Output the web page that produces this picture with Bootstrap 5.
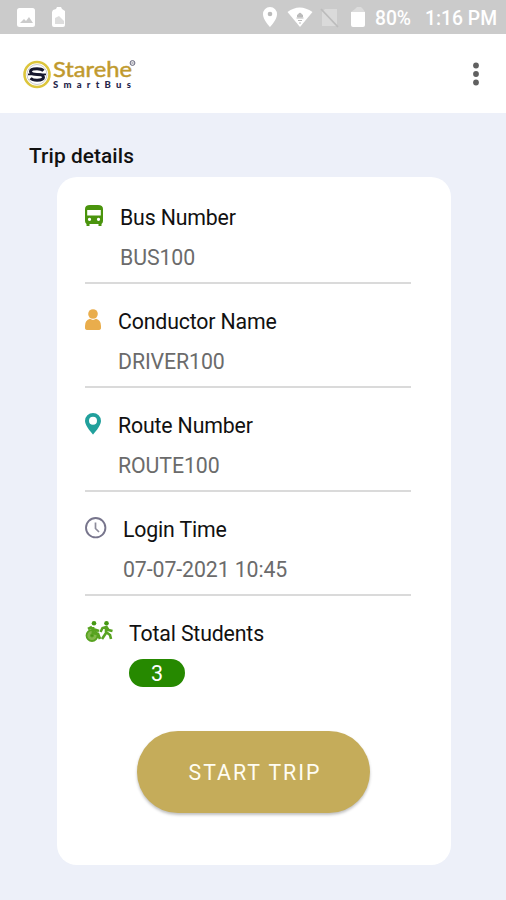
<!DOCTYPE html>
<html lang="en">
<head>
<meta charset="utf-8">
<meta name="viewport" content="width=device-width, initial-scale=1">
<title>Starehe SmartBus</title>
<link href="https://cdn.jsdelivr.net/npm/bootstrap@5.3.0/dist/css/bootstrap.min.css" rel="stylesheet">
<style>
body{font-family:Roboto,"Noto Sans",sans-serif;background:#edf0f9;color:#111;height:900px;overflow:hidden}
svg{display:block;flex:none}
.status{height:34px;background:#cbcbcb;color:#fff;font-size:19.3px;font-weight:500;line-height:37px;padding:0 9px 0 16px}
.status svg{height:34px}
.clock{margin-left:14px}
.topbar{height:79px;padding:0 22px 0 22px}
.page-title{font-size:20.8px;font-weight:500;line-height:24px;letter-spacing:.1px;padding:31px 0 0 29px;height:64px;margin:0}
.trip{width:394px;height:688px;margin-left:57px;border-radius:20px;padding:3px 40px 0 28px}
.item{height:104px;border-bottom:2px solid #dadada;padding-top:23px}
.item.last{border:0;height:auto}
.item svg{margin-top:1.5px}
.caption{font-size:21.3px;line-height:30px;letter-spacing:-.16px;white-space:nowrap}
.value{font-size:21.3px;line-height:30px;letter-spacing:-.1px;margin-top:10px;color:#6b6b6b;white-space:nowrap}
.count{width:56px;height:28px;font-size:21.5px;line-height:29px;background:#268900;margin-top:10px}
.start{width:233px;height:82px;margin:44px 0 0 52px;padding:2px 0 0 3px;background:#c5ac5a!important;color:#fffdf2!important;font-size:21.3px;letter-spacing:2px;box-shadow:0 2px 3px rgba(0,0,0,.25)}
</style>
</head>
<body>
<header>
  <div class="status d-flex">
    <svg width="60" viewBox="0 0 60 34"><rect y="8" x="1" width="18" height="19" rx="2.500" fill="#fff"/><path d="M4 23l4-4 2 2 3-4 4 6z" fill="#cbcbcb"/><path d="M37 10l3-1 1-2h4l1 2 3 2v14q0 2-2 2H38q-2 0-2-2V12z" fill="#fff"/><path d="M39 24v-6l4-2 5 5v3z" fill="#ddd"/></svg>
    <svg class="ms-auto" width="108" viewBox="0 0 108 34"><path d="M11 7a7 7 0 0 0-7 7.500C4 20 11 27 11 27s7-7 7-12.500A7 7 0 0 0 11 7z" fill="#fff"/><circle cx="11" cy="14" r="2.300" fill="#bbb"/><path d="M28.500 12q12-9 25 0L41 27z" fill="#fff"/><path d="M38.500 15l2.500-2 2.500 2v2h-5zM37.500 18h7M39 20.500h4M40 23h2" fill="#bbb" stroke="#bbb" stroke-width="1"/><path d="M66 9h12v17H63V12z" fill="#dadada"/><path d="M62 9l17 18" stroke="#bcbcbc" stroke-width="1.800"/><path d="M96 9l2-2h4l2 2 2 3H92z" fill="#dcdcdc"/><path d="M92 12h14v13q0 2-2 2H94q-2 0-2-2z" fill="#fff"/></svg>
    <span class="ms-1 ps-1">80%</span><span class="clock">1:16 PM</span>
  </div>
  <nav class="topbar bg-white d-flex align-items-center justify-content-between">
    <svg width="116" height="34" viewBox="0 0 116 34" role="img" aria-label="Starehe SmartBus">
      <circle cx="15" cy="17.500" r="12.500" fill="#fff" stroke="#dcc53c" stroke-width="2.600"/>
      <circle cx="15" cy="17.500" r="10" fill="none" stroke="#c9c9cc" stroke-width="1"/>
      <path d="M21.500 13.800q-2-2-6.500-2-6.500 0-6.500 2.700 0 2.900 6.500 2.900t6.500 2.900q0 2.900-6.500 2.900-4.500 0-6.500-2" fill="none" stroke="#17182f" stroke-width="3"/><path d="M6 17.400h18" stroke="#17182f" stroke-width="1.700"/>
      <g font-family="Lato,sans-serif"><text x="31" y="20" font-size="21.500" font-weight="400" textLength="79" fill="#bf982b" stroke="#c3a03a" stroke-width=".5" lengthAdjust="spacingAndGlyphs">Starehe</text>
      <text x="31" y="30.500" font-size="9.500" font-weight="900" textLength="78" fill="#25264b">SmartBus</text></g>
      <circle cx="110.500" cy="6" r="2.400" fill="#eee" stroke="#64657c" stroke-width="1"/><path d="M109.500 6h2" stroke="#64657c" stroke-width=".8"/>
    </svg>
    <svg width="16" height="28" viewBox="0 0 16 28" fill="#606060"><circle cx="8" cy="5.500" r="2.900"/><circle cx="8" cy="14" r="2.900"/><circle cx="8" cy="22.500" r="2.900"/></svg>
  </nav>
</header>
<main>
  <h1 class="page-title">Trip details</h1>
  <section class="trip bg-white">
    <div class="item d-flex">
      <svg width="35" height="24" viewBox="0 0 35 24"><path fill="#4a940d" fill-rule="evenodd" d="M0 4Q0 0 5 0h8q5 0 5 4v12q0 2-1.500 3v2h-3v-2h-9v2h-3v-2Q0 18 0 16zM2.200 5v5.500h13.600V5zM4.500 12.800a1.600 1.600 0 1 0 .01 0zm9 0a1.600 1.600 0 1 0 .01 0z"/></svg>
      <div><div class="caption">Bus Number</div><div class="value">BUS100</div></div>
    </div>
    <div class="item d-flex">
      <svg width="33" height="24" viewBox="0 0 33 24" fill="#e9ad4c"><circle cx="8" cy="5" r="4.800"/><path d="M0 17q0-6 5-7.200Q8 12 11 9.800q5 1.200 5 7.200v2q0 2-3 2H3q-3 0-3-2z"/></svg>
      <div><div class="caption">Conductor Name</div><div class="value">DRIVER100</div></div>
    </div>
    <div class="item d-flex">
      <svg width="33" height="24" viewBox="0 0 33 24"><path fill="#21a09c" fill-rule="evenodd" d="M8 0a8 8 0 0 0-8 8c0 5 8 13.500 8 13.500S16 13 16 8a8 8 0 0 0-8-8zm0 3.800a4 4 0 1 1 0 8 4 4 0 0 1 0-8z"/></svg>
      <div><div class="caption">Route Number</div><div class="value">ROUTE100</div></div>
    </div>
    <div class="item d-flex">
      <svg width="38" height="24" viewBox="0 0 38 24" fill="none"><circle cx="10.700" cy="10.700" r="9.700" stroke="#77758c" stroke-width="1.900"/><path d="M10.500 5.500v6l3.500 3.500" stroke="#8d8c9b" stroke-width="1.700"/></svg>
      <div><div class="caption">Login Time</div><div class="value">07-07-2021 10:45</div></div>
    </div>
    <div class="item last d-flex">
      <svg width="44" height="24" viewBox="0 0 44 24" fill="none" stroke="#58a321"><circle cx="9" cy="2.300" r="2.300" fill="#459813" stroke="none"/><circle cx="7" cy="14.500" r="5.500" fill="#82b84c" stroke-width="1.800"/><circle cx="7" cy="14.500" r="1.500" fill="#459813"/><path d="M8 6v6l5 1 2 5M8 8l6 2M3 8l4-2" stroke-width="2.800"/><circle cx="21.500" cy="2.300" r="2.300" fill="#459813" stroke="none"/><path d="M21 5v7l-4 6M21 11l4 3 1 4M15.500 11l2-4 4-1 2 3 4 1" stroke-width="2.600"/></svg>
      <div><div class="caption">Total Students</div><div class="count rounded-pill text-white text-center">3</div></div>
    </div>
    <button class="start btn rounded-pill border-0" type="button">START TRIP</button>
  </section>
</main>
<script src="https://cdn.jsdelivr.net/npm/bootstrap@5.3.0/dist/js/bootstrap.bundle.min.js"></script>
</body>
</html>
